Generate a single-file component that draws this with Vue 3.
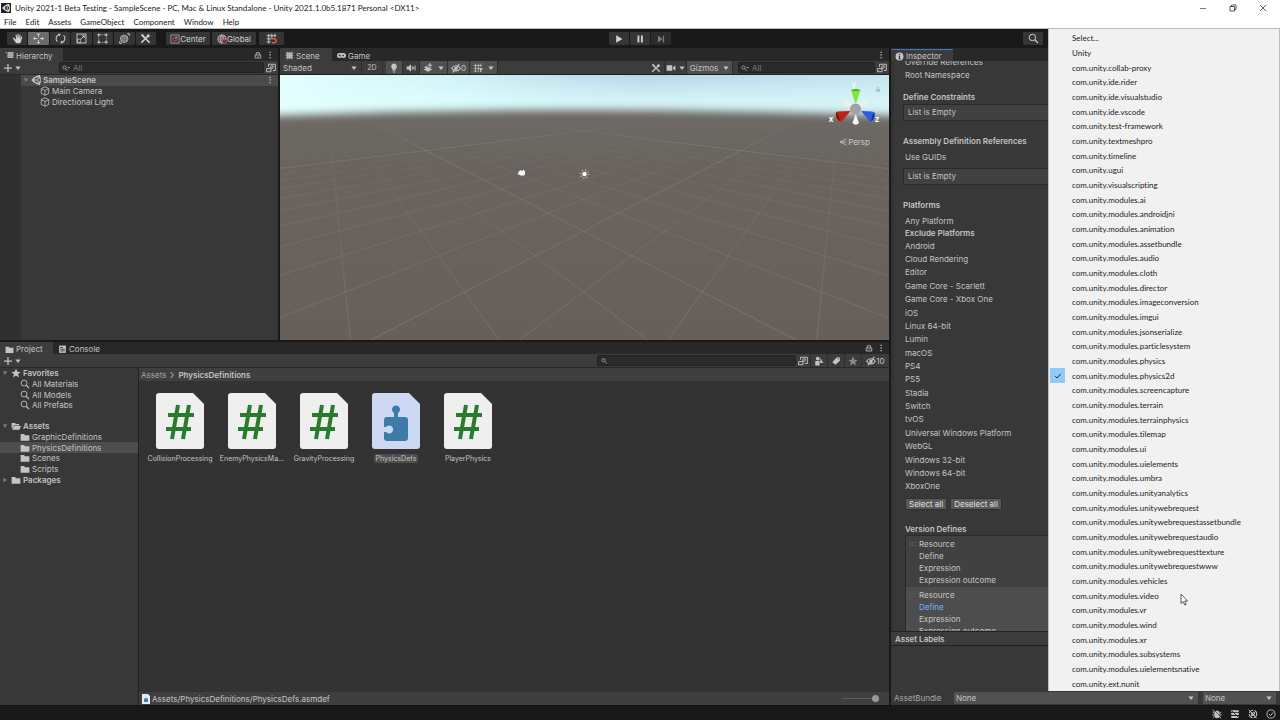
<script setup>
import { h, ref } from 'vue'

const icons = {
  unity: '<path transform="scale(.667)" fill-rule="evenodd" fill="currentColor" d="M15.929 11.999l3.628-6.268 1.753 6.268-1.753 6.267-3.628-6.267zm-1.589.918l3.629 6.267-6.315-1.611-4.567-4.656h7.253zm3.628-8.102l-3.628 6.267H7.086l4.567-4.656 6.315-1.611zM23.997 9.560L21.438.01l-9.552 2.559-1.414 2.487-2.870-.021L.611 12l6.991 6.965 2.869-.022 1.416 2.484 9.551 2.558 2.560-9.549L22.544 12z"/>',
  hand: '<path d="M4 8 2.500 6.700c-.8-.5-1.700.4-1.100 1.100L5 13.500c.6 1 1.300 1.500 2.500 1.500h2.500c1.500 0 2.500-.8 3-2.300l1.800-6.500c.2-1-1.100-1.400-1.500-.5L12 8.500l.5-5.500c0-1-1.400-1.100-1.500-.1L10.300 8 9.500 1.800C9.300.9 8 1 8 2v6L6.600 2.600C6.300 1.700 5 2 5.200 3l.9 6.500z" fill="currentColor"/>',
  move: '<path d="M8 0 5.500 3h1.900v3h1.200V3h1.900zM8 16l2.500-3H8.600v-3H7.400v3H5.500zM0 8l3 2.500V8.600h3V7.400H3V5.500zM16 8l-3-2.500v1.900h-3v1.200h3v1.900z" fill="currentColor"/>',
  rotate: '<path d="M3.500 12.500A6 6 0 0 1 6 2.300M12.500 3.500A6 6 0 0 1 10 13.700" fill="none" stroke="currentColor" stroke-width="1.500"/><path d="M4.500 1.200 8.200 1 6.800 5zM11.500 14.800 7.800 15l1.400-4z" fill="currentColor"/>',
  scale: '<rect x="1.500" y="1.500" width="13" height="13" fill="none" stroke="currentColor" stroke-width="1.300"/><rect x="2.500" y="9" width="4.500" height="4.500" fill="none" stroke="currentColor"/><path d="m7.500 8.500 4.500-4.500M8.500 4H12v3.500" fill="none" stroke="currentColor" stroke-width="1.300"/>',
  rect: '<path d="M4 2.500h8M4 13.500h8M2.500 4v8M13.500 4v8" stroke="currentColor" stroke-dasharray="2 1"/><g fill="currentColor"><path d="M1 1h3v3H1zM12 1h3v3h-3zM1 12h3v3H1zM12 12h3v3h-3z"/></g>',
  transform: '<circle cx="7.500" cy="8.500" r="5.500" fill="none" stroke="currentColor"/><path d="M2 8.500h11M7.500 3v11M4.500 5v7M10.500 5v7M3 5.500h9M3 11.500h9" stroke="currentColor" stroke-width=".8"/><path d="M12 1h3v3M1 12v3h3" fill="none" stroke="currentColor" stroke-width="1.400"/>',
  tools: '<path d="m2 14 8.500-8.500M5 5l9 9" stroke="currentColor" stroke-width="2.200"/><path d="M9.500 3.500 12.500 1l.3 2.300 2.300.3-2.600 3-2.500-.3zM1.500 2.500 4 1.500l3 3.500-1.500 2-3.500-2.500z" fill="currentColor"/>',
  pivot: '<rect x="1.500" y="1.500" width="13" height="13" fill="none" stroke="#c4c4c4"/><circle cx="8" cy="8" r="3.500" fill="none" stroke="#d0524e" stroke-width="1.500"/><path d="m8 8 4.500-4.500" stroke="#c4c4c4" stroke-width="1.200"/>',
  globe: '<circle cx="8" cy="8" r="6.500" fill="none" stroke="currentColor" stroke-width="1.200"/><ellipse cx="8" cy="8" rx="3" ry="6.500" fill="none" stroke="currentColor"/><path d="M1.500 8h13M2.500 4.500h11M2.500 11.500h7M8 1.500v13" stroke="currentColor" stroke-width=".9"/><rect x="9" y="9" width="6" height="6" fill="#703633" stroke="#d0524e"/>',
  snap: '<path d="M1 4h14M1 8.500h7M1 13h6M4 1v14M8.500 1v7M13 1v5" stroke="currentColor" stroke-width="1.300"/><path d="M8.500 8.500h3.500a2.800 2.800 0 0 1 0 5.600H8.500" fill="none" stroke="#e05650" stroke-width="2.200"/>',
  grid: '<path d="M1 4h13M1 8.500h8M1 13h6M4 1v13M8.500 1v13M12.500 1v5" stroke="currentColor" stroke-width="1.200"/><path d="M9 8h7l-2.500 3v4l-2-1v-3z" fill="currentColor"/>',
  play: '<path d="M3.500 2v12l10-6z" fill="currentColor"/>',
  pause: '<path d="M4 2.500h3v11H4zM9.500 2.500h3v11h-3z" fill="currentColor"/>',
  step: '<path d="M3 2.500v11l7.500-5.500zM11 2.500h2v11h-2z" fill="currentColor"/>',
  search: '<circle cx="6.500" cy="6.500" r="4.700" fill="none" stroke="currentColor" stroke-width="1.400"/><path d="m10 10 4.500 4.500" stroke="currentColor" stroke-width="1.700"/>',
  searchMenu: '<circle cx="5" cy="7" r="3.200" fill="none" stroke="currentColor" stroke-width="1.600"/><path d="m7.500 9.500 3.500 4" stroke="currentColor" stroke-width="1.800"/><path d="M10.500 6H16l-2.700 3z" fill="currentColor"/>',
  searchSmall: '<circle cx="7" cy="6.500" r="3.200" fill="none" stroke="currentColor" stroke-width="1.600"/><path d="m9.500 9 4 4" stroke="currentColor" stroke-width="1.800"/>',
  hierarchy: '<path d="M1 2h2v2H1zM4.500 2H15v2H4.500zM4.500 6H15v2H4.500zM4.500 10H15v2H4.500zM4.500 5h1v7h-1z" fill="currentColor"/><path d="M5 2h10v10H5z" fill="currentColor" opacity=".6"/>',
  lock: '<path d="M2.500 8h11v6h-11zM4.500 8V3.500h6.500V8" fill="none" stroke="currentColor" stroke-width="1.600"/><path d="M7.300 10h1.500v2.200H7.300z" fill="currentColor"/>',
  dots: '<path d="M7 1.500h2.500v2.500H7zM7 6.700h2.500v2.500H7zM7 12h2.500v2.500H7z" fill="currentColor"/>',
  plus: '<path d="M8 0v16M0 8h16" stroke="currentColor" stroke-width="2.500"/>',
  arrow: '<path d="M1 4h14l-7 9z" fill="currentColor"/>',
  foldOpen: '<path d="M2 3h12L8 14z" fill="currentColor"/>',
  foldClosed: '<path d="M4 2v12l9-6z" fill="currentColor"/>',
  pick: '<path d="M4 6V2h11v10h-4" fill="none" stroke="currentColor" stroke-width="1.500"/><circle cx="9.500" cy="6.500" r="2.300" fill="none" stroke="currentColor" stroke-width="1.200"/><path d="M1 9h7v5H1z" fill="none" stroke="currentColor" stroke-width="1.500"/><path d="m8 8 5-4" stroke="currentColor"/>',
  scene: '<path d="M4 1v14M8 1v14M12 1v14M1 4h14M1 8h14M1 12h14" stroke="currentColor" stroke-width="1.200"/><path d="M3 3h10v10H3z" fill="currentColor" opacity=".75"/>',
  game: '<path d="M4.500 3.500h7a4.300 4.300 0 0 1 0 9c-1.500 0-2-1-3.500-1s-2 1-3.500 1a4.300 4.300 0 0 1 0-9z" fill="currentColor"/><path d="M3 8h4M5 6v4" stroke="#282828" stroke-width="1.300"/><circle cx="11" cy="8" r="1.500" fill="#282828"/>',
  bulb: '<path d="M8 1a4.500 4.500 0 0 0-2.500 8.300V11h5V9.300A4.500 4.500 0 0 0 8 1zM5.800 12h4.400v1.200H5.800zM6.500 14h3v1.200h-3z" fill="currentColor"/>',
  audio: '<path d="M1 5.500h3L8 2v12l-4-3.500H1z" fill="currentColor"/><path d="M10 5v6M12.300 6v4M14.500 4v8" stroke="currentColor" stroke-width="1.500"/>',
  fx: '<path d="m1 10 7-2.500 7 2.500-7 4zM1 6.500 6 5l3 2 5-1-6 4.500z" fill="currentColor"/><path d="M11 0v7M7.500 3.500h7" stroke="currentColor" stroke-width="1.600"/>',
  eyeOff: '<path d="M1 8.500c3-5.500 11-5.500 14 0-3 5.500-11 5.500-14 0z" fill="none" stroke="currentColor" stroke-width="1.700"/><circle cx="8" cy="8.500" r="2.700" fill="currentColor"/><path d="M3 15 13.500 1.500" stroke="currentColor" stroke-width="1.700"/>',
  camera: '<path d="M1 3.500h9v9H1zM11 7l4-3.500v9L11 9z" fill="currentColor"/>',
  folder: '<path d="M1 3h5.500l1.500 2h7v9H1z" fill="currentColor"/>',
  folderOpen: '<path d="M1 3h5.500l1.500 1.700h5V7H4.500L2 12H1z" fill="currentColor"/><path d="M4.800 8H16l-2.500 6H2z" fill="currentColor"/>',
  console: '<path d="M2 1h12v13H2z" fill="currentColor"/><path d="M4 4.500h5M4 7.500h8M4 10.500h8" stroke="#282828" stroke-width="1.400"/>',
  star: '<path d="m8 .8 2.100 5 5.400.4-4.100 3.500 1.300 5.300L8 12.100 3.300 15l1.300-5.300L.5 6.200l5.400-.4z" fill="currentColor"/>',
  cube: '<path d="m8 1.200 6 3v7.600l-6 3-6-3V4.200zM2 4.200l6 3 6-3M8 7.200v7.600" fill="none" stroke="currentColor" stroke-width="1.300" stroke-linejoin="round"/>',
  shapes: '<circle cx="6" cy="4" r="3" fill="currentColor"/><path d="M2 8h7v7H2zM10 3l5 8h-5z" fill="currentColor"/>',
  tag: '<path d="m2 10 7-7.500 5-.5.5 5L7.500 14z" fill="currentColor"/><circle cx="12" cy="4.500" r="1" fill="#3c3c3c"/>',
  info: '<circle cx="8" cy="8" r="7" fill="currentColor"/><path d="M7 3h2.200v2.200H7zM6.300 6.500h2.900v5h1V13H6v-1.500h1V8h-.7z" fill="#3c3c3c"/>',
  bugOff: '<path d="M4 5.500C4 2 12 2 12 5.500V12c-1 3.500-7 3.500-8 0z" fill="currentColor"/><path d="M1 5l3 2M15 5l-3 2M.5 9.500H4M15.500 9.500H12M1.500 14 4 12M14.500 14 12 12" stroke="currentColor" stroke-width="1.500"/><path d="m3 1 12 13" stroke="#191919"/><path d="m1 1 13 14" stroke="currentColor" stroke-width="1.300"/>',
  cacheOff: '<path d="M2 2h12v3H2zM2 6.500h12v3H2zM2 11h12v3.500H2z" fill="currentColor"/><path d="m3 3 11 11" stroke="#191919" stroke-width="1.300"/>',
  syncOff: '<circle cx="8" cy="8" r="6" fill="none" stroke="currentColor" stroke-width="1.700" stroke-dasharray="8 2"/><path d="M5 5h6v6H5z" fill="currentColor"/><path d="m3 1 12 13" stroke="#191919"/><path d="m1 1 13 14" stroke="currentColor" stroke-width="1.300"/>',
  done: '<circle cx="8" cy="8" r="6.500" fill="none" stroke="currentColor" stroke-width="1.400"/><path d="m4.800 8 2.400 2.600L11.500 5.500" fill="none" stroke="currentColor" stroke-width="1.500"/>',
  check: '<path d="m2.500 8.500 3.500 3.500 7.500-8" fill="none" stroke="currentColor" stroke-width="1.800"/>',
}
const Icon = (p) => h('svg', { viewBox: '0 0 16 16', 'aria-hidden': 'true', innerHTML: icons[p.name] })
Icon.props = ['name']

const menus = ['File', 'Edit', 'Assets', 'GameObject', 'Component', 'Window', 'Help']
const toolNames = ['hand', 'move', 'rotate', 'scale', 'rect', 'transform', 'tools']
const favorites = ['All Materials', 'All Models', 'All Prefabs']
const folders = ['GraphicDefinitions', 'PhysicsDefinitions', 'Scenes', 'Scripts']
const files = [
  { name: 'CollisionProcessing' },
  { name: 'EnemyPhysicsMa...' },
  { name: 'GravityProcessing' },
  { name: 'PhysicsDefs', asm: true },
  { name: 'PlayerPhysics' },
]
const platforms = ['Android', 'Cloud Rendering', 'Editor', 'Game Core - Scarlett', 'Game Core - Xbox One', 'iOS', 'Linux 64-bit', 'Lumin', 'macOS', 'PS4', 'PS5', 'Stadia', 'Switch', 'tvOS', 'Universal Windows Platform', 'WebGL', 'Windows 32-bit', 'Windows 64-bit', 'XboxOne']
const mods = ['ai', 'androidjni', 'animation', 'assetbundle', 'audio', 'cloth', 'director', 'imageconversion', 'imgui', 'jsonserialize', 'particlesystem', 'physics', 'physics2d', 'screencapture', 'terrain', 'terrainphysics', 'tilemap', 'ui', 'uielements', 'umbra', 'unityanalytics', 'unitywebrequest', 'unitywebrequestassetbundle', 'unitywebrequestaudio', 'unitywebrequesttexture', 'unitywebrequestwww', 'vehicles', 'video', 'vr', 'wind', 'xr', 'subsystems', 'uielementsnative']
const resources = ['Select...', 'Unity',
  ...['collab-proxy', 'ide.rider', 'ide.visualstudio', 'ide.vscode', 'test-framework', 'textmeshpro', 'timeline', 'ugui', 'visualscripting'].map((n) => 'com.unity.' + n),
  ...mods.map((n) => 'com.unity.modules.' + n), 'com.unity.ext.nunit']
const chosen = ref('com.unity.modules.physics2d')

// Ground grid: cell corner (i, j) projected on the scene view.
const project = (i, j) => {
  const d = i + j + 4.32
  return [304 + (257 * (i - j)) / d, 24.6 + 831 / d]
}
const segment = (a, b) => `M${a.map((n) => n.toFixed(1))}L${b.map((n) => n.toFixed(1))}`
const gridLines = []
for (let n = -12; n <= 17; n++) {
  const near = -3.6 - n
  gridLines.push(segment(project(n, near), project(n, 45)))
  gridLines.push(segment(project(near, n), project(45, n)))
}
const minor = gridLines.join('')
const major = [1, 11, -9].map((n) => segment(project(n, -3.6 - n), project(n, 60)) + segment(project(-3.6 - n, n), project(60, n))).join('')
</script>

<template>
  <div class="editor">
    <header>
      <div class="titlebar">
        <span class="logo"><Icon name="unity" /></span>
        <h1>Unity 2021-1 Beta Testing - SampleScene - PC, Mac &amp; Linux Standalone - Unity 2021.1.0b5.1871 Personal &lt;DX11&gt;</h1>
        <div class="wincontrols">
          <button aria-label="Minimize"><svg viewBox="0 0 8 8"><path d="M1 4.500h6" stroke="#777" /></svg></button>
          <button aria-label="Restore"><svg viewBox="0 0 8 8"><path d="M1 2.500h4.500V7H1zM2.500 2.500V1H7v4.500H5.500" fill="none" stroke="#333" stroke-width=".8" /></svg></button>
          <button aria-label="Close"><svg viewBox="0 0 8 8"><path d="m1 1 6 6M7 1 1 7" stroke="#333" stroke-width=".8" /></svg></button>
        </div>
      </div>
      <nav class="menubar"><button v-for="m in menus" :key="m">{{ m }}</button></nav>
    </header>

    <div class="toolbar">
      <div class="group">
        <div class="tools">
          <button v-for="t in toolNames" :key="t" class="tb" :class="{ on: t === 'move' }" :aria-label="t"><Icon :name="t" /></button>
        </div>
        <div class="pivots">
          <button class="tb wide"><Icon name="pivot" />Center</button>
          <button class="tb wide"><Icon name="globe" />Global</button>
        </div>
        <button class="tb snap" aria-label="Grid snapping"><Icon name="snap" /></button>
      </div>
      <div class="playback">
        <button class="tb" aria-label="Play"><Icon name="play" /></button>
        <button class="tb" aria-label="Pause"><Icon name="pause" /></button>
        <button class="tb dim" aria-label="Step"><Icon name="step" /></button>
      </div>
      <div class="group end"><button class="tb" aria-label="Search"><Icon name="search" /></button></div>
    </div>

    <main>
      <div class="left">
        <div class="upper">
          <section class="panel">
            <div class="tabs">
              <button class="tab active hier"><Icon name="hierarchy" />Hierarchy</button>
              <span class="fill"></span>
              <button class="ib" aria-label="Lock"><Icon name="lock" /></button>
              <button class="ib" aria-label="Options"><Icon name="dots" /></button>
            </div>
            <div class="bar">
              <button class="add" aria-label="Create"><Icon name="plus" /><Icon name="arrow" class="tiny" /></button>
              <label class="search hsearch"><Icon name="searchMenu" /><input type="text" placeholder="All" aria-label="Search hierarchy" /></label>
              <button class="ib" aria-label="Pick"><Icon name="pick" /></button>
            </div>
            <div class="outline">
              <div class="gutter"></div>
              <ul>
                <li class="root"><Icon name="foldOpen" class="fold" /><Icon name="unity" /><b>SampleScene</b><span class="fill"></span><Icon name="dots" /></li>
                <li><Icon name="cube" />Main Camera</li>
                <li><Icon name="cube" />Directional Light</li>
              </ul>
            </div>
          </section>

          <section class="panel">
            <div class="tabs">
              <button class="tab active scenetab"><Icon name="scene" />Scene</button>
              <button class="tab"><Icon name="game" />Game</button>
              <span class="fill"></span>
              <button class="ib" aria-label="Options"><Icon name="dots" /></button>
            </div>
            <div class="bar scenebar">
              <label class="drop shading"><select aria-label="Shading"><option>Shaded</option></select><Icon name="arrow" class="tiny" /></label>
              <button class="sb twod">2D</button>
              <button class="sb lit" aria-label="Lighting"><Icon name="bulb" /></button>
              <button class="sb" aria-label="Audio"><Icon name="audio" /></button>
              <button class="sb lit pair" aria-label="Effects"><Icon name="fx" /><Icon name="arrow" class="tiny" /></button>
              <button class="sb lit hid"><Icon name="eyeOff" />0</button>
              <button class="sb lit pair" aria-label="Grid"><Icon name="grid" /><Icon name="arrow" class="tiny" /></button>
              <span class="fill"></span>
              <button class="sb" aria-label="Tools"><Icon name="tools" /></button>
              <button class="sb cam" aria-label="Camera"><Icon name="camera" /><Icon name="arrow" class="tiny" /></button>
              <button class="sb lit giz">Gizmos<Icon name="arrow" class="tiny" /></button>
              <label class="search ssearch"><Icon name="searchMenu" /><input type="text" placeholder="All" aria-label="Search scene" /></label>
              <button class="ib" aria-label="Pick"><Icon name="pick" /></button>
            </div>
            <div class="viewport">
              <svg class="world" viewBox="0 0 610 265" preserveAspectRatio="xMidYMid slice" aria-label="Scene view">
                <defs>
                  <linearGradient id="sky" x1="0" y1="0" x2="0" y2="1">
                    <stop offset="0" stop-color="#b5d2e6" /><stop offset=".4" stop-color="#d3f2f5" /><stop offset="1" stop-color="#dcfbfb" />
                  </linearGradient>
                  <linearGradient id="glow" x1="0" y1="0" x2="1" y2="0">
                    <stop offset="0" stop-color="#e4ffff" /><stop offset=".3" stop-color="#dcffff" stop-opacity=".7" /><stop offset=".6" stop-color="#d5f5f8" stop-opacity=".1" /><stop offset="1" stop-color="#d5f5f8" stop-opacity=".5" />
                  </linearGradient>
                  <linearGradient id="earth" x1="0" y1="35" x2="0" y2="265" gradientUnits="userSpaceOnUse">
                    <stop offset="0" stop-color="#6d6865" /><stop offset=".25" stop-color="#69645f" /><stop offset="1" stop-color="#666059" />
                  </linearGradient>
                  <linearGradient id="fade" x1="0" y1="50" x2="0" y2="265" gradientUnits="userSpaceOnUse">
                    <stop offset="0" stop-color="#a09b95" stop-opacity="0" /><stop offset=".35" stop-color="#a09b95" stop-opacity=".25" /><stop offset="1" stop-color="#a09b95" stop-opacity=".45" />
                  </linearGradient>
                  <linearGradient id="fadeMajor" x1="0" y1="42" x2="0" y2="150" gradientUnits="userSpaceOnUse">
                    <stop offset="0" stop-color="#a09b95" stop-opacity="0" /><stop offset=".3" stop-color="#a09b95" stop-opacity=".3" /><stop offset="1" stop-color="#a09b95" stop-opacity=".1" />
                  </linearGradient>
                  <filter id="soft" x="-10%" y="-10%" width="120%" height="120%"><feGaussianBlur stdDeviation="0 4" /></filter>
                </defs>
                <rect width="610" height="60" fill="url(#sky)" />
                <rect width="610" height="60" fill="url(#glow)" />
                <path d="M-60 43Q304 27 670 43V320H-60z" fill="url(#earth)" filter="url(#soft)" />
                <path :d="minor" stroke="url(#fade)" stroke-width=".6" fill="none" />
                <path :d="major" stroke="url(#fadeMajor)" stroke-width=".8" fill="none" />
                <path d="M239 97l2-2 1.500 1 1.500-1.500 1.500 2v3l-1 1h-3.500l-1-1-1.500.5z" fill="#fff" />
                <circle cx="305" cy="99" r="4" fill="none" stroke="#eee8c8" stroke-width="1.500" stroke-dasharray="1 2.140" opacity=".7" />
                <circle cx="305" cy="99" r="2.300" fill="#fffdf0" />
              </svg>
              <svg class="gizmo" viewBox="0 0 56 72">
                <g font-family="Inter, sans-serif" font-size="8" font-weight="700" fill="#fff" text-anchor="middle">
                  <text x="28" y="9" opacity=".6">y</text><text x="5" y="44">x</text><text x="51" y="44">z</text>
                </g>
                <path d="M50 11h4v3h-4z" fill="#b4bfc2" /><path d="M51 11V9h2v2" fill="none" stroke="#b4bfc2" stroke-width=".7" />
                <path d="m29 30-8-1.500q-4-2.500-3.500-5l3.500-1.500zM30 30l8-1.500q4-2.500 3.500-5L38 22z" fill="#eef0f0" />
                <circle cx="29.500" cy="31" r="5.500" fill="#a3a3a3" />
                <path d="M25 12q4.500-2 9.500 0L29.700 26z" fill="#7be83c" /><path d="M25 12q4.500 2.400 9.500 0-4.700-2-9.500 0z" fill="#53b31f" />
                <path d="M24.500 33 12 33.500q-3 .5-2 3.500l3.500 6q1.500 1.500 3-.5z" fill="#c41f17" /><path d="M10 34q3 3 4 9.500-5-3-4-9.500z" fill="#7d100c" />
                <path d="m35 33 11 .5q3 .5 2 3.500l-2 6q-1.500 1.500-3-.5z" fill="#2b5ce0" /><path d="M48.500 34q-3 3-3.500 9.500 5-3 3.500-9.500z" fill="#15369d" />
                <path d="m29.700 36 3.300 9q-3.300 3.400-6.600 0z" fill="#f4f4f4" />
              </svg>
              <button class="persp"><svg viewBox="0 0 8 8"><path d="M7.500 1 1 4l6.500 3M1 4h6.500" fill="none" stroke="currentColor" stroke-width=".8" /></svg>Persp</button>
            </div>
          </section>
        </div>

        <section class="panel project">
          <div class="tabs">
            <button class="tab active proj"><Icon name="folder" />Project</button>
            <button class="tab"><Icon name="console" />Console</button>
            <span class="fill"></span>
            <button class="ib" aria-label="Lock"><Icon name="lock" /></button>
            <button class="ib" aria-label="Options"><Icon name="dots" /></button>
          </div>
          <div class="bar">
            <button class="add" aria-label="Create"><Icon name="plus" /><Icon name="arrow" class="tiny" /></button>
            <span class="fill"></span>
            <label class="search psearch"><Icon name="searchSmall" /><input type="text" aria-label="Search project" /></label>
            <button class="pb pick" aria-label="Pick"><Icon name="pick" /></button>
            <button class="pb" aria-label="Filter by type"><Icon name="shapes" /></button>
            <button class="pb" aria-label="Filter by label"><Icon name="tag" /></button>
            <button class="pb faint" aria-label="Save search"><Icon name="star" /></button>
            <button class="pb count"><Icon name="eyeOff" />10</button>
          </div>
          <div class="browser">
            <div class="side">
              <ul class="tree">
                <li><Icon name="foldOpen" class="fold" /><Icon name="star" /><b>Favorites</b></li>
                <li v-for="f in favorites" :key="f" class="sub"><Icon name="search" />{{ f }}</li>
                <li aria-hidden="true"></li>
                <li><Icon name="foldOpen" class="fold" /><Icon name="folderOpen" /><b>Assets</b></li>
                <li v-for="f in folders" :key="f" class="sub" :class="{ sel: f === 'PhysicsDefinitions' }"><Icon name="folder" />{{ f }}</li>
                <li><Icon name="foldClosed" class="fold" /><Icon name="folder" /><b>Packages</b></li>
              </ul>
            </div>
            <div class="content">
              <nav class="crumbs"><a href="#">Assets</a><svg viewBox="0 0 6 8"><path d="m1.500 1 3 3-3 3" fill="none" stroke="currentColor" /></svg><b>PhysicsDefinitions</b></nav>
              <div class="files">
                <figure v-for="f in files" :key="f.name" :class="{ picked: f.asm }">
                  <svg viewBox="0 0 48 56">
                    <path d="M3 0h34l11 11v42a3 3 0 0 1-3 3H3a3 3 0 0 1-3-3V3a3 3 0 0 1 3-3z" :fill="f.asm ? '#cdd8f2' : '#efefef'" />
                    <path v-if="!f.asm" d="M22 12 16 46M33 12 27 46M12 22h26M10 36h25" stroke="#2a7a2c" stroke-width="4" fill="none" />
                    <path v-else d="M14 24h8v-4a4 4 0 1 1 4 0v4h7a3 3 0 0 1 3 3v18a3 3 0 0 1-3 3H15a3 3 0 0 1-3-3v-6h2a4 4 0 1 0 0-5h-2v-7a3 3 0 0 1 2-3z" fill="#3f7ba9" />
                  </svg>
                  <figcaption>{{ f.name }}</figcaption>
                </figure>
              </div>
              <div class="path">
                <svg viewBox="0 0 8 10"><path d="M0 0h6l2 2v8H0z" fill="#e6ecf5" /><path d="M2 4.500h1.500v-1h1v1H6V8H2z" fill="#3f7ba9" /></svg>
                <span>Assets/PhysicsDefinitions/PhysicsDefs.asmdef</span><span class="fill"></span>
                <input type="range" value="100" aria-label="Icon size" />
              </div>
            </div>
          </div>
        </section>
      </div>

      <section class="panel inspector">
        <div class="tabs"><button class="tab active insp"><Icon name="info" />Inspector</button></div>
        <div class="props">
          <div class="props-in">
            <p class="row13">Override References</p>
            <p class="row13">Root Namespace</p>
            <h2 class="first">Define Constraints</h2>
            <div class="empty">List is Empty</div>
            <h2>Assembly Definition References</h2>
            <p class="guids">Use GUIDs</p>
            <div class="empty">List is Empty</div>
            <h2>Platforms</h2>
            <p class="any">Any Platform</p>
            <p class="excl">Exclude Platforms</p>
            <ul class="platforms"><li v-for="p in platforms" :key="p">{{ p }}</li></ul>
            <div class="btns"><button>Select all</button><button>Deselect all</button></div>
            <h2 class="vd">Version Defines</h2>
            <div class="defs">
              <div v-for="n in 2" :key="n" class="def" :class="{ cur: n === 2 }">
                <svg viewBox="0 0 8 8"><path d="M0 2.500h8M0 5.500h8" stroke="#5b5b5b" /></svg>
                <ul><li>Resource</li><li :class="{ hot: n === 2 }">Define</li><li>Expression</li><li>Expression outcome</li></ul>
              </div>
            </div>
          </div>
        </div>
        <h2 class="labels">Asset Labels</h2>
        <div class="labelarea"></div>
        <div class="bundle">
          <label for="bundle">AssetBundle</label>
          <span class="drop big"><select id="bundle"><option>None</option></select><Icon name="arrow" class="tiny" /></span>
          <span class="drop small"><select aria-label="Asset bundle variant"><option>None</option></select><Icon name="arrow" class="tiny" /></span>
        </div>
      </section>
    </main>

    <footer><Icon name="bugOff" /><Icon name="cacheOff" /><Icon name="syncOff" /><Icon name="done" /></footer>

    <ul class="popup" role="menu">
      <li v-for="r in resources" :key="r" role="none">
        <button role="menuitemradio" :aria-checked="r === chosen" @click="chosen = r"><span class="mark" :class="{ checked: r === chosen }"><Icon v-if="r === chosen" name="check" /></span>{{ r }}</button>
      </li>
    </ul>
    <svg class="cursor" viewBox="0 0 8 13"><path d="M1 1v9.500l2.200-2 1.500 3.500 1.500-.7-1.500-3.300h2.800z" fill="#fff" stroke="#333" stroke-width=".8" /></svg>
  </div>
</template>

<style>
body { margin: 0; background: #191919; }
</style>

<style scoped>
* { box-sizing: border-box; }
.editor { position: relative; display: flex; flex-direction: column; height: 100vh; overflow: hidden; background: #191919; color: #c4c4c4; font: 8px/10px Inter, "Liberation Sans", sans-serif; font-variant-ligatures: none; }
ul, p, h1, h2, figure { margin: 0; padding: 0; list-style: none; font-size: inherit; }
button, input, select { font: inherit; font-variant-ligatures: none; color: inherit; border: 0; padding: 0; margin: 0; background: none; border-radius: 0; outline: 0; }
button { display: flex; align-items: center; white-space: nowrap; }
svg { flex: none; width: 10px; height: 10px; display: block; }
svg.tiny { width: 6px; height: 6px; }
b { font-weight: 600; }
.fill { flex: 1; }

header { background: #fff; color: #222; height: 29px; border-bottom: 1px solid #b9bdba; font-family: Lato, "Noto Sans", sans-serif; flex: none; }
.titlebar { display: flex; align-items: center; height: 15px; padding-left: 1px; }
.logo { background: #222; color: #eee; padding: 1px; margin-right: 4px; }
.logo svg { width: 8px; height: 8px; }
h1 { font-weight: 400; flex: 1; }
.wincontrols { display: flex; height: 13px; padding-right: 2px; }
.wincontrols button { width: 30px; justify-content: center; }
.wincontrols svg { width: 8px; height: 8px; }
.menubar { display: flex; gap: 9px; padding: 2px 4px; }

.toolbar { display: grid; grid-template-columns: 1fr auto 1fr; align-items: center; height: 19px; flex: none; }
.group { display: flex; align-items: center; padding-left: 7px; }
.tools { display: grid; grid-template-columns: repeat(7, 1fr); gap: 1px; width: 149px; }
.tb { height: 13px; min-width: 20px; justify-content: center; background: #353535; border-radius: 1px; color: #d2d2d2; }
.tb.on { background: #6b6b6b; }
.tb.dim { color: #7d7d7d; background: #2b2b2b; }
.tb svg { width: 11px; height: 11px; }
.playback svg { width: 10px; height: 10px; }
.pivots { display: flex; gap: 2px; margin: 0 3px 0 10px; }
.tb.wide { width: 44px; }
.tb.wide svg { width: 10px; height: 10px; }
.tb.snap { width: 25px; }
.playback { display: flex; gap: 1px; }
.end { justify-content: flex-end; padding-right: 237px; }

main { flex: 1; min-height: 0; display: grid; grid-template-columns: 889fr 389fr; grid-template-rows: minmax(0, 1fr); gap: 2px; }
.left { display: grid; grid-template-rows: minmax(0, 292fr) minmax(0, 363fr); gap: 2px; min-width: 0; }
.upper { display: grid; grid-template-columns: 278fr 609fr; gap: 2px; min-width: 0; }
.panel { display: flex; flex-direction: column; min-width: 0; min-height: 0; background: #383838; }
.tabs { display: flex; height: 13px; background: #282828; flex: none; }
.project .tabs { height: 12px; }
.tab { gap: 2px; padding: 2px 8px 0 5px; }
.tab.active { background: #3c3c3c; }
.tab.hier { width: 63px; }
.tab.scenetab { width: 52px; }
.tab.proj { width: 53px; }
.tab svg { width: 9px; height: 9px; }
.ib { width: 14px; justify-content: center; }
.tabs .ib { width: 12px; }
.tabs .ib svg { width: 8px; height: 8px; }
.tabs .ib:last-child { margin-right: 2px; }
.bar { display: flex; height: 14px; flex: none; background: #3c3c3c; border-bottom: 1px solid #282828; }
.project .bar { height: 14px; }
.add { gap: 3px; padding-left: 4px; width: 59px; }
.add svg:first-child { width: 8px; height: 8px; }
.search { display: flex; align-items: center; background: #2a2a2a; border: 1px solid #222; border-radius: 2px; margin: 1px 0; color: #aaa; gap: 3px; padding-left: 2px; }
.search svg { width: 8px; height: 8px; }
.search input { width: 100%; min-width: 0; height: 10px; }
.search input::placeholder { color: #787878; opacity: 1; }
.hsearch { flex: 1; }
.outline { flex: 1; display: flex; }
.gutter { width: 21px; background: #303030; }
.outline ul { flex: 1; display: grid; grid-template-rows: repeat(3, 1fr); height: 32px; }
.outline li { display: flex; align-items: center; min-height: 0; gap: 2px; padding-left: 19px; }
.outline li.root { background: #4a4a4a; padding: 0 4px 0 2px; }
.root svg:last-child { width: 8px; height: 8px; }
svg.fold { width: 6px; height: 6px; color: #7b7b7b; }

.scenebar { border-bottom-color: #1f1f1f; }
.drop { position: relative; display: flex; align-items: center; }
.drop select { width: 100%; appearance: none; }
.drop svg { position: absolute; right: 4px; pointer-events: none; }
.shading { width: 82px; padding-left: 3px; border-right: 1px solid #2a2a2a; }
.sb { justify-content: center; width: 17px; border-right: 1px solid #2e2e2e; }
.sb.lit { background: #505050; }
.sb.twod { width: 21px; margin-right: 3px; font-size: 7px; }
.sb.pair { width: 28px; gap: 5px; }
.sb.hid { width: 22px; }
.sb.cam { width: 22px; gap: 3px; }
.sb.giz { width: 46px; gap: 5px; }
.ssearch { width: 137px; margin-left: 5px; }
.viewport { position: relative; flex: 1; min-height: 0; overflow: hidden; background: #67605b; }
.world { position: absolute; inset: 0; width: 100%; height: 100%; }
.gizmo { position: absolute; right: 7px; top: 3px; width: 56px; height: 72px; }
.persp { position: absolute; right: 19px; top: 62px; color: #cbc8c4; gap: 1px; }
.persp svg { width: 8px; height: 8px; }

.psearch { width: 199px; }
.pb { justify-content: center; width: 17px; border-left: 1px solid #2e2e2e; }
.pb.pick { width: 14px; border-left: 0; }
.pb.faint { color: #8a8a8a; }
.pb.count { width: 28px; }
.browser { flex: 1; min-height: 0; display: flex; }
.side { width: 139px; border-right: 1px solid #222; flex: none; }
.tree { display: grid; grid-auto-rows: 1fr; height: 117px; }
.tree li { display: flex; align-items: center; gap: 2px; padding-left: 2px; min-height: 0; white-space: nowrap; }
.tree .fold { margin-right: 1px; }
.tree li.sub { padding-left: 20px; }
.tree li.sel { background: #4d4d4d; }
.content { flex: 1; min-width: 0; display: flex; flex-direction: column; background: #333; }
.crumbs { display: flex; align-items: center; height: 13px; padding-left: 2px; gap: 3px; background: #3f3f3f; }
.crumbs a { color: #a8a8a8; text-decoration: none; }
.crumbs svg { width: 6px; height: 8px; }
.files { flex: 1; display: flex; flex-wrap: wrap; align-content: flex-start; padding: 12px 5px; }
.files figure { width: 72px; display: flex; flex-direction: column; align-items: center; gap: 5px; }
.files svg { width: 48px; height: 56px; }
figcaption { font-size: 7px; line-height: 9px; padding: 0 2px; border-radius: 2px; }
.picked figcaption { background: #4d4d4d; }
.path { display: flex; align-items: center; height: 13px; background: #3f3f3f; padding: 0 10px 0 3px; gap: 2px; }
.path svg { width: 8px; height: 10px; }
input[type="range"] { appearance: none; width: 37px; height: 7px; background: linear-gradient(#5e5e5e, #5e5e5e) center / 100% 1px no-repeat; }
input[type="range"]::-webkit-slider-thumb { appearance: none; width: 7px; height: 7px; border-radius: 50%; background: #999; }

.tab.insp { border-top: 1px solid #3a79bb; padding: 1px 0 0 4px; width: 62px; margin-top: 1px; height: 12px; }
.props { flex: 1; min-height: 0; overflow: hidden; border-left: 3px solid #333; }
.props-in { display: flex; flex-direction: column; margin-top: -5px; padding: 0 3px 0 9px; }
.props p { padding-left: 2px; }
.row13 { height: 13px; line-height: 13px; }
h2 { font-weight: 600; line-height: 12px; }
.props h2 { margin-top: 14px; }
.props h2.first { margin-top: 9px; }
.empty { margin-top: 1px; height: 17px; line-height: 15px; padding-left: 4px; background: #414141; border: 1px solid #2a2a2a; }
.guids { height: 20px; line-height: 20px; }
.any { margin-top: 4px; line-height: 12px; }
.excl { line-height: 12px; font-weight: 600; }
.platforms { height: 254px; display: grid; grid-auto-rows: 1fr; padding-left: 2px; }
.platforms li { display: flex; align-items: center; min-height: 0; }
.btns { display: flex; gap: 3px; margin: 5px 0 0 2px; }
.btns button { height: 12px; padding: 0 3px; background: #585858; border: 1px solid #303030; border-radius: 1px; color: #e0e0e0; }
.props h2.vd { margin: 13px 0 0 2px; }
.defs { margin-left: 2px; border: 1px solid #2a2a2a; background: #414141; }
.def { display: flex; gap: 3px; padding: 2px 0 0 3px; height: 51px; align-items: flex-start; }
.def.cur { background: #4d4d4d; }
.def li { line-height: 12px; }
.def svg { width: 7px; height: 12px; }
.hot { color: #7baefa; }
.labels { height: 15px; line-height: 14px; padding-left: 4px; background: #3c3c3c; border-top: 1px solid #222; border-bottom: 1px solid #222; flex: none; }
.labelarea { height: 45px; flex: none; }
.bundle { display: flex; align-items: center; height: 14px; flex: none; padding: 0 4px 0 3px; gap: 5px; }
.bundle label { width: 55px; color: #a8a8a8; }
.drop.big, .drop.small { height: 12px; background: #515151; padding-left: 2px; }
.big { flex: 245; }
.small { flex: 72; }

footer { height: 15px; flex: none; display: flex; align-items: center; justify-content: flex-end; gap: 8px; padding: 2px 4px 0 0; border-top: 1px solid #141414; }

.popup { position: absolute; top: 29px; right: 0; bottom: 29px; width: 232px; padding: 2px 0 0; display: grid; grid-auto-rows: 1fr; background: #f1f1f1; color: #1b1b1b; border: 1px solid #bdbdbd; border-width: 0 1px; font-family: Lato, "Noto Sans", sans-serif; }
.popup li { min-height: 0; display: flex; }
.popup button { width: 100%; height: 100%; gap: 7px; padding-left: 1px; }
.mark { width: 15px; align-self: stretch; display: flex; align-items: center; justify-content: center; }
.mark.checked { background: #91c9f7; }
.mark svg { width: 8px; height: 8px; }
.cursor { position: absolute; left: 1180px; top: 593px; width: 8px; height: 13px; }
</style>
